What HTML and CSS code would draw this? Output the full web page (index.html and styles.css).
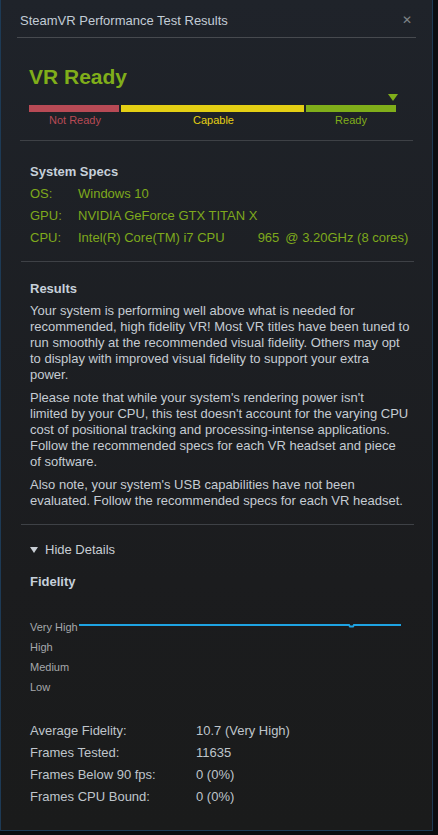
FILE: index.html
```html
<!DOCTYPE html>
<html lang="en">
  <head>
    <meta charset="UTF-8" />
    <meta name="viewport" content="width=device-width, initial-scale=1.0" />
    <title>SteamVR Performance Test Results</title>
    <link rel="stylesheet" href="styles.css">
  </head>
  <body>
    <div class="window">
      <div class="titlebar">
        <span class="title">SteamVR Performance Test Results</span>
        <span class="close">&#x2715;</span>
      </div>

      <div class="verdict">
        <h1>VR Ready</h1>
        <div class="meter">
          <div class="marker"></div>
          <div class="bars">
            <div class="bar red"></div>
            <div class="bar yellow"></div>
            <div class="bar green"></div>
          </div>
          <div class="labels">
            <span class="red-text">Not Ready</span>
            <span class="yellow-text">Capable</span>
            <span class="green-text">Ready</span>
          </div>
        </div>
      </div>

      <div class="section specs">
        <h2>System Specs</h2>
        <div class="spec"><span class="key">OS:</span><span>Windows 10</span></div>
        <div class="spec"><span class="key">GPU:</span><span>NVIDIA GeForce GTX TITAN X</span></div>
        <div class="spec">
          <span class="key">CPU:</span>
          <span>Intel(R) Core(TM) i7 CPU</span>
          <span class="cpu-model">965</span>
          <span class="cpu-clock">@ 3.20GHz (8 cores)</span>
        </div>
      </div>

      <div class="section results">
        <h2>Results</h2>
        <p>Your system is performing well above what is needed for<br>
          recommended, high fidelity VR! Most VR titles have been tuned to<br>
          run smoothly at the recommended visual fidelity. Others may opt<br>
          to display with improved visual fidelity to support your extra<br>
          power.</p>
        <p>Please note that while your system's rendering power isn't<br>
          limited by your CPU, this test doesn't account for the varying CPU<br>
          cost of positional tracking and processing-intense applications.<br>
          Follow the recommended specs for each VR headset and piece<br>
          of software.</p>
        <p>Also note, your system's USB capabilities have not been<br>
          evaluated. Follow the recommended specs for each VR headset.</p>
      </div>

      <div class="details">
        <div class="toggle"><span class="arrow"></span>Hide Details</div>
        <h2>Fidelity</h2>
        <div class="chart">
          <div class="chart-row">
            <span class="level">Very High</span>
            <svg class="line" width="322" height="6" viewBox="0 0 322 6">
              <path d="M0 2 H270 L271 3.5 H274 L275 2 H322" fill="none" stroke="#1ea3e3" stroke-width="2"/>
            </svg>
          </div>
          <div class="chart-row"><span class="level">High</span></div>
          <div class="chart-row"><span class="level">Medium</span></div>
          <div class="chart-row"><span class="level">Low</span></div>
        </div>

        <div class="stats">
          <div class="stat"><span class="key">Average Fidelity:</span><span>10.7 (Very High)</span></div>
          <div class="stat"><span class="key">Frames Tested:</span><span>11635</span></div>
          <div class="stat"><span class="key">Frames Below 90 fps:</span><span>0 (0%)</span></div>
          <div class="stat"><span class="key">Frames CPU Bound:</span><span>0 (0%)</span></div>
        </div>
      </div>
    </div>
  </body>
</html>
```

FILE: styles.css
```css
body {
  margin: 0;
  background-color: #0b0d10;
  font-family: "Liberation Sans", Arial, sans-serif;
  font-size: 13px;
}
.window {
  width: 431px;
  height: 830px;
  border: 1px solid #1d3a55;
  border-top: none;
  background: linear-gradient(#1f232a, #1b1c1e 70%, #1a1b1b);
  color: #c5ccd3;
  overflow: hidden;
}
.titlebar {
  display: flex;
  justify-content: space-between;
  align-items: center;
  height: 37px;
  margin: 0 16px 0 16px;
  padding: 0 4px 0 3px;
  border-bottom: 1px solid #474a4f;
}
.title {
  font-size: 13px;
  color: #c2ccd6;
  margin-top: 3px;
}
.close {
  font-size: 12px;
  color: #7f8388;
  margin-top: 2px;
}
.verdict {
  margin: 0 19px;
  padding: 27px 9px 12px 9px;
  border-bottom: 1px solid #3e4146;
}
h1 {
  margin: 0;
  font-size: 21px;
  line-height: 24px;
  color: #80ae1a;
}
.meter {
  width: 367px;
}
.marker {
  width: 0;
  height: 0;
  margin: 5px 0 4px auto;
  margin-right: -2px;
  border-left: 5px solid transparent;
  border-right: 5px solid transparent;
  border-top: 7px solid #80ae1a;
}
.bars {
  display: flex;
  gap: 2px;
  height: 7px;
}
.bar.red {
  width: 90px;
  background-color: #b84a55;
}
.bar.yellow {
  width: 183px;
  background-color: #e4cf14;
}
.bar.green {
  width: 90px;
  background-color: #80ae1a;
}
.labels {
  display: flex;
  font-size: 11px;
  line-height: 16px;
}
.labels span {
  text-align: center;
}
.red-text {
  width: 92px;
  color: #b84a55;
}
.yellow-text {
  width: 185px;
  color: #e4cf14;
}
.green-text {
  width: 90px;
  color: #80ae1a;
}
.section {
  margin: 0 18px 0 20px;
  padding: 0 9px;
  border-bottom: 1px solid #3e4146;
}
h2 {
  margin: 0;
  font-size: 13px;
  color: #c6d0da;
}
.specs {
  padding-top: 23px;
  padding-bottom: 12px;
}
.specs h2 {
  line-height: 16px;
  margin-bottom: 3px;
}
.spec {
  display: flex;
  line-height: 22px;
  color: #7ea91c;
  white-space: nowrap;
}
.spec .key {
  width: 48px;
  flex-shrink: 0;
}
.cpu-model {
  margin-left: 33px;
}
.cpu-clock {
  margin-left: 6px;
}
.results {
  padding-top: 19px;
  padding-bottom: 8px;
}
.results h2 {
  line-height: 16px;
  margin-bottom: 6px;
}
.results p {
  margin: 0 0 7px 0;
  line-height: 16px;
  color: #c5ccd3;
  white-space: nowrap;
}
.details {
  padding: 16px 29px 0 29px;
}
.toggle {
  display: flex;
  align-items: center;
  gap: 7px;
  line-height: 18px;
  color: #c8ced4;
}
.arrow {
  width: 0;
  height: 0;
  border-left: 4px solid transparent;
  border-right: 4px solid transparent;
  border-top: 6px solid #c8ced4;
}
.details h2 {
  margin-top: 15px;
  line-height: 16px;
}
.chart {
  margin-top: 27px;
}
.chart-row {
  display: flex;
  align-items: center;
  height: 20px;
}
.level {
  font-size: 11px;
  color: #a5a8ab;
  width: 49px;
  flex-shrink: 0;
}
.line {
  margin-top: -3px;
}
.stats {
  margin-top: 23px;
}
.stat {
  display: flex;
  line-height: 22px;
  color: #bfc5cb;
}
.stat .key {
  width: 166px;
}
```
